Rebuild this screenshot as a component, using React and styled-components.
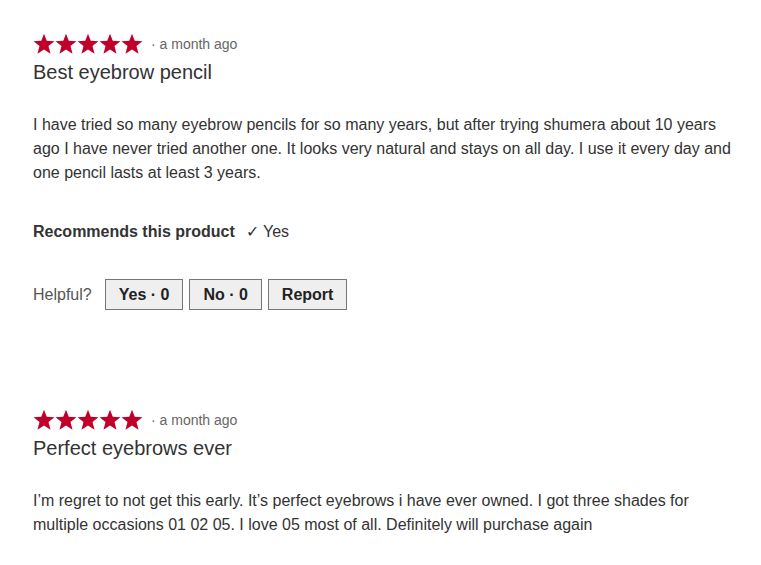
import styled, { createGlobalStyle } from "styled-components";

const GlobalStyle = createGlobalStyle`
  body {
    margin: 0;
    background: #fff;
    font-family: "Liberation Sans", Arial, sans-serif;
    color: #333;
  }
`;

const reviews = [
  {
    title: "Best eyebrow pencil",
    date: "a month ago",
    body: "I have tried so many eyebrow pencils for so many years, but after trying shumera about 10 years ago I have never tried another one. It looks very natural and stays on all day. I use it every day and one pencil lasts at least 3 years.",
    recommends: true,
  },
  {
    title: "Perfect eyebrows ever",
    date: "a month ago",
    body: "I’m regret to not get this early. It’s perfect eyebrows i have ever owned. I got three shades for multiple occasions 01 02 05. I love 05 most of all. Definitely will purchase again",
    recommends: false,
  },
];

function Star() {
  return (
    <svg width="22" height="22" viewBox="0 0 24 24">
      <polygon
        fill="#c0002b"
        points="12,0.8 15,8.5 23.4,8.9 16.9,14.2 19.1,22.6 12,17.9 4.9,22.6 7.1,14.2 0.6,8.9 9,8.5"
      />
    </svg>
  );
}

function Review({ review, last }) {
  return (
    <Item $last={last}>
      <Meta>
        <Stars>
          {[0, 1, 2, 3, 4].map((i) => (
            <Star key={i} />
          ))}
        </Stars>
        <Date>· {review.date}</Date>
      </Meta>
      <Title>{review.title}</Title>
      <Body>{review.body}</Body>
      {review.recommends && (
        <>
          <Recommend>
            <strong>Recommends this product</strong>
            <span>✓ Yes</span>
          </Recommend>
          <Helpful>
            <span>Helpful?</span>
            <Buttons>
              <Vote>Yes · 0</Vote>
              <Vote>No · 0</Vote>
              <Vote>Report</Vote>
            </Buttons>
          </Helpful>
        </>
      )}
    </Item>
  );
}

export default function App() {
  return (
    <Page>
      <GlobalStyle />
      {reviews.map((r, i) => (
        <Review key={i} review={r} last={i === reviews.length - 1} />
      ))}
    </Page>
  );
}

const Page = styled.div`
  padding: 33px 8px 0 33px;
  max-width: 710px;
`;

const Item = styled.div`
  margin-bottom: ${(p) => (p.$last ? "0" : "99px")};
`;

const Meta = styled.div`
  display: flex;
  align-items: center;
  height: 22px;
  gap: 8px;
`;

const Stars = styled.div`
  display: flex;
`;

const Date = styled.span`
  font-size: 14px;
  color: #666;
`;

const Title = styled.h3`
  margin: 5px 0 0;
  font-size: 20px;
  line-height: 24px;
  font-weight: 400;
  color: #333;
`;

const Body = styled.p`
  margin: 29px 0 0;
  font-size: 16px;
  line-height: 24px;
  color: #333;
`;

const Recommend = styled.div`
  margin-top: 35px;
  display: flex;
  gap: 11px;
  font-size: 16px;
  line-height: 24px;
  strong {
    font-weight: 700;
  }
`;

const Helpful = styled.div`
  margin-top: 35px;
  display: flex;
  align-items: center;
  gap: 13px;
  font-size: 16px;
  color: #555;
`;

const Buttons = styled.div`
  display: flex;
  gap: 6px;
`;

const Vote = styled.button`
  height: 31px;
  padding: 0 13px;
  border: 1px solid #767676;
  background: #efefef;
  font-family: "Liberation Sans", Arial, sans-serif;
  font-size: 16px;
  font-weight: 700;
  color: #222;
  cursor: pointer;
`;
